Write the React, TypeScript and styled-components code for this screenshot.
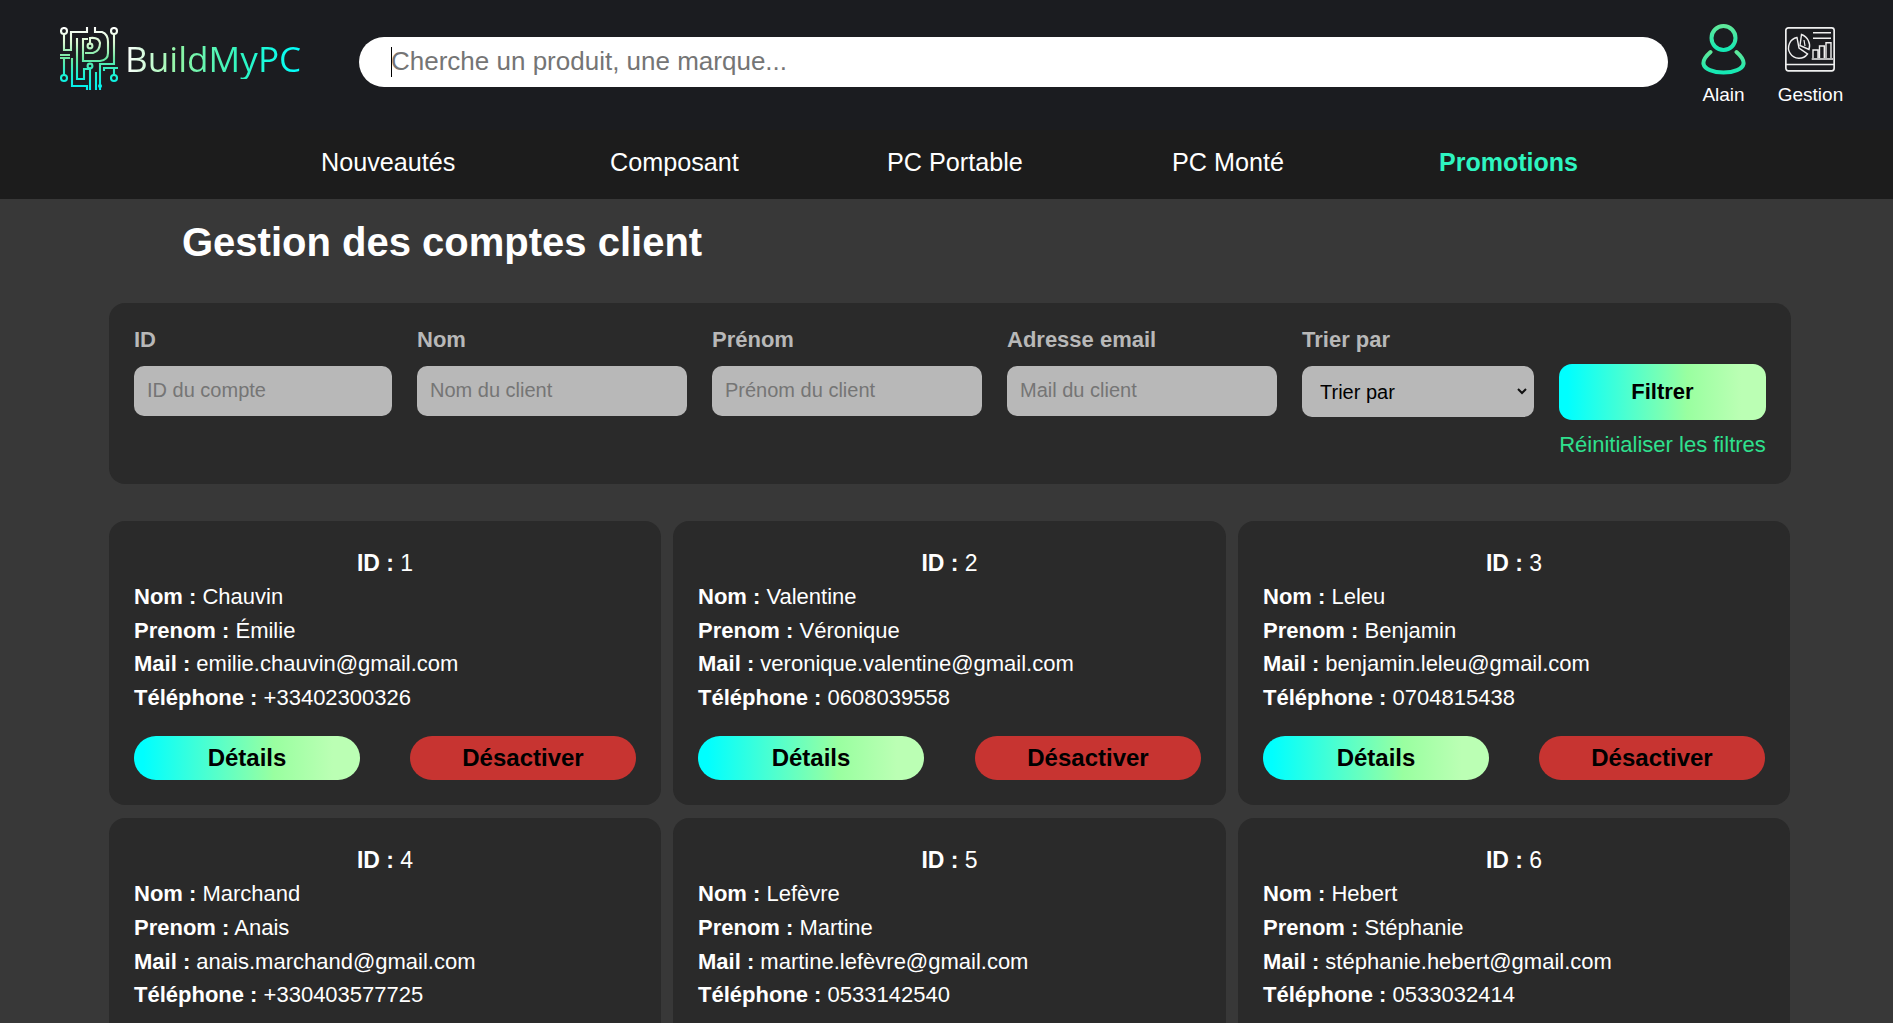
import React from 'react';
import styled, { createGlobalStyle } from 'styled-components';

const GlobalStyle = createGlobalStyle`
  html, body {
    margin: 0;
    height: 100%;
    overflow: hidden;
    background-color: #383838;
    font-family: "Liberation Sans", Arial, sans-serif;
  }
  #root {
    height: 100vh;
    overflow: hidden;
  }
  * {
    box-sizing: border-box;
  }
`;

const TopBar = styled.div`
  height: 130px;
  background-color: #1b1c20;
  display: flex;
  align-items: flex-start;
  padding: 28px 0 0 60px;
`;

const Brand = styled.div`
  width: 299px;
  height: 62px;
  display: flex;
  align-items: center;
  gap: 5px;
`;

const BrandName = styled.span`
  font-family: "Open Sans", "Noto Sans", sans-serif;
  font-size: 35.2px;
  line-height: 42px;
  margin-top: -2px;
  background: linear-gradient(90deg, #ffffff 0%, #8ff5a5 30%, #2ff5c0 65%, #00ffff 100%);
  -webkit-background-clip: text;
  background-clip: text;
  color: transparent;
`;

const SearchBox = styled.div`
  position: relative;
  width: 1309px;
  height: 50px;
  margin-top: 9px;
`;

const SearchInput = styled.input`
  width: 100%;
  height: 100%;
  border: none;
  outline: none;
  border-radius: 25px;
  background-color: #fff;
  padding: 0 32px 2px;
  font-family: inherit;
  font-size: 26px;
  color: #000;
  &::placeholder {
    color: #757575;
  }
`;

const Caret = styled.span`
  position: absolute;
  left: 32px;
  top: 10px;
  width: 1px;
  height: 30px;
  background-color: #000;
`;

const Shortcuts = styled.div`
  display: flex;
  margin-left: 12px;
`;

const Shortcut = styled.div`
  width: 87px;
  display: flex;
  flex-direction: column;
  align-items: center;
  color: #fff;
  font-size: 19px;
  line-height: 22px;
`;

const ShortcutIcon = styled.div`
  height: 54px;
  margin-top: -6px;
  margin-bottom: 8px;
  display: flex;
  align-items: center;
`;

const NavBar = styled.nav`
  height: 69px;
  background-color: #1c1c1c;
  display: grid;
  grid-template-columns: 289px 277px 285px 267px auto;
  align-items: center;
  padding: 0 0 5px 321px;
`;

const NavLink = styled.a<{ $active?: boolean }>`
  font-size: ${p => (p.$active ? '25px' : '25.2px')};
  color: ${p => (p.$active ? '#2ef5c0' : '#fff')};
  font-weight: ${p => (p.$active ? 700 : 400)};
`;

const Main = styled.main`
  padding: 0 102px 0 109px;
`;

const Title = styled.h1`
  margin: 0;
  padding: 20px 0 38px 73px;
  font-size: 40px;
  line-height: 46px;
  font-weight: 700;
  color: #fff;
`;

const FilterPanel = styled.section`
  height: 181px;
  background-color: #2a2a2a;
  border-radius: 16px;
  padding: 25px;
  display: grid;
  grid-template-columns: 258px 270px 270px 270px 232px 207px;
  column-gap: 25px;
  margin-bottom: 37px;
`;

const Field = styled.div`
  display: flex;
  flex-direction: column;
`;

const FieldLabel = styled.label`
  height: 26px;
  margin-bottom: 12px;
  font-size: 22px;
  line-height: 24px;
  font-weight: 700;
  color: #b8b8b8;
`;

const TextInput = styled.input`
  height: 50px;
  width: 100%;
  border: none;
  border-radius: 10px;
  background-color: #b8b8b8;
  padding: 0 13px 1px;
  font-family: inherit;
  font-size: 20px;
  &::placeholder {
    color: #757575;
  }
`;

const SortSelect = styled.select`
  height: 51px;
  width: 100%;
  border: none;
  border-radius: 10px;
  appearance: none;
  background: #b8b8b8 url("data:image/svg+xml,%3Csvg xmlns='http://www.w3.org/2000/svg' width='10' height='7'%3E%3Cpath d='M1 1l4 4 4-4' fill='none' stroke='%23111' stroke-width='2'/%3E%3C/svg%3E") no-repeat right 7px center;
  padding: 0 0 0 18px;
  font-family: inherit;
  font-size: 20px;
  color: #000;
`;

const FilterActions = styled.div`
  display: flex;
  flex-direction: column;
  padding-top: 36px;
`;

const GradientButton = styled.button`
  border: none;
  color: #000;
  font-family: inherit;
  font-weight: 700;
  background: linear-gradient(90deg, #00ffff 4%, #99ffa0 62%, #bbffb4 88%);
`;

const FilterButton = styled(GradientButton)`
  height: 56px;
  border-radius: 13px;
  font-size: 22px;
`;

const ResetLink = styled.a`
  margin-top: 12px;
  font-size: 22px;
  line-height: 25px;
  white-space: nowrap;
  text-align: center;
  color: #2fe08e;
`;

const CardGrid = styled.div`
  display: grid;
  grid-template-columns: 552px 553px 552px;
  gap: 13px 12px;
`;

const Card = styled.article`
  background-color: #2a2a2a;
  border-radius: 16px;
  padding: 25px;
  color: #fff;
  font-size: 22px;
  line-height: 33.75px;
`;

const CardId = styled.div`
  padding-top: 1px;
  margin-bottom: -1px;
  text-align: center;
  font-size: 23px;
`;

const CardActions = styled.div`
  display: flex;
  justify-content: space-between;
  margin-top: 21.5px;
`;

const DetailsButton = styled(GradientButton)`
  width: 226px;
  height: 44px;
  border-radius: 22px;
  font-size: 24px;
`;

const DisableButton = styled.button`
  width: 226px;
  height: 44px;
  border: none;
  border-radius: 22px;
  background-color: #c73431;
  color: #000;
  font-family: inherit;
  font-size: 24px;
  font-weight: 700;
`;

const clients = [
  { id: 1, nom: 'Chauvin', prenom: 'Émilie', mail: 'emilie.chauvin@gmail.com', tel: '+33402300326', actions: true },
  { id: 2, nom: 'Valentine', prenom: 'Véronique', mail: 'veronique.valentine@gmail.com', tel: '0608039558', actions: true },
  { id: 3, nom: 'Leleu', prenom: 'Benjamin', mail: 'benjamin.leleu@gmail.com', tel: '0704815438', actions: true },
  { id: 4, nom: 'Marchand', prenom: 'Anais', mail: 'anais.marchand@gmail.com', tel: '+330403577725', actions: false },
  { id: 5, nom: 'Lefèvre', prenom: 'Martine', mail: 'martine.lefèvre@gmail.com', tel: '0533142540', actions: false },
  { id: 6, nom: 'Hebert', prenom: 'Stéphanie', mail: 'stéphanie.hebert@gmail.com', tel: '0533032414', actions: false },
];

const navItems = ['Nouveautés', 'Composant', 'PC Portable', 'PC Monté'];

const filters = [
  { label: 'ID', placeholder: 'ID du compte' },
  { label: 'Nom', placeholder: 'Nom du client' },
  { label: 'Prénom', placeholder: 'Prénom du client' },
  { label: 'Adresse email', placeholder: 'Mail du client' },
];

const LogoIcon = () => (
  <svg width="60" height="64" viewBox="60 28 60 64" fill="none">
    <defs>
      <linearGradient id="logoStroke" gradientUnits="userSpaceOnUse" x1="0" y1="28" x2="0" y2="90">
        <stop offset="0" stopColor="#ffffff" />
        <stop offset="0.25" stopColor="#d8f7d0" />
        <stop offset="0.5" stopColor="#6fe8a0" />
        <stop offset="0.75" stopColor="#1ff0d0" />
        <stop offset="1" stopColor="#00f0f0" />
      </linearGradient>
    </defs>
    <g stroke="url(#logoStroke)" strokeWidth="2.1">
      <circle cx="64" cy="32" r="3" />
      <circle cx="114" cy="32" r="3" />
      <circle cx="64" cy="79" r="3" />
      <circle cx="114" cy="79" r="3" />
      <circle cx="90" cy="47" r="2.4" />
      <circle cx="90" cy="67" r="2.4" />
      <path d="M64 35V51H71V33H87V28" />
      <path d="M95 28V33H102Q108 35 108 43V54Q108 61 100 62H83V40H88" />
      <path d="M90 44V39Q99 38 100 44Q100 52 93 54H85" />
      <path d="M114 35V65H100V74" />
      <path d="M118 69H104V72" />
      <path d="M114 76V69" />
      <path d="M60 56H70M60 59H70" />
      <path d="M64 76V59" />
      <path d="M72 59V87H87V91" />
      <path d="M77 39V80H84V70H90" />
      <path d="M90 70V91" />
      <path d="M96 73V91" />
      <path d="M100 74V91" />
      <circle cx="100" cy="87" r="1" fill="#00f0f0" />
    </g>
  </svg>
);

const UserIcon = () => (
  <svg width="46" height="54" viewBox="0 0 46 54" fill="none">
    <defs>
      <linearGradient id="userStroke" x1="0" y1="0" x2="0" y2="1">
        <stop offset="0" stopColor="#5fe89a" />
        <stop offset="1" stopColor="#14e8b4" />
      </linearGradient>
    </defs>
    <g stroke="url(#userStroke)" strokeWidth="4" strokeLinecap="round">
      <circle cx="22.5" cy="16" r="12" />
      <path d="M9.500 30C5 34 1.800 38 2.500 42C3.500 47 12 50.500 22.500 50.500C33 50.500 41.500 47 42.500 42C43.200 38 40 34 35.500 30" />
    </g>
  </svg>
);

const ChartIcon = () => (
  <svg width="52" height="45" viewBox="0 0 52 45" fill="none" stroke="#efefef">
    <rect x="0.85" y="0.85" width="48.3" height="43" rx="2.500" strokeWidth="1.700" />
    <path d="M1 37.500H49" strokeWidth="1.700" />
    <path d="M12 10.500A10.500 10.500 0 1 0 22.500 27L14 21Z" strokeWidth="1.400" />
    <path d="M16.500 7.500A12 12 0 0 1 24 22.500L15 18.500Z" strokeWidth="1.400" />
    <path d="M19 13L20 19" strokeWidth="1.200" />
    <path d="M28 5.700H46M28 11.300H46" strokeWidth="1.600" />
    <path d="M26.700 32H48M28 31V23H33V31M34.500 31V19H39.300V31M41 31V15.700H46V31" strokeWidth="1.400" />
  </svg>
);

export default function App() {
  return (
    <>
      <GlobalStyle />
      <header>
        <TopBar>
          <Brand>
            <LogoIcon />
            <BrandName>BuildMyPC</BrandName>
          </Brand>
          <SearchBox>
            <SearchInput placeholder="Cherche un produit, une marque..." />
            <Caret />
          </SearchBox>
          <Shortcuts>
            <Shortcut>
              <ShortcutIcon>
                <UserIcon />
              </ShortcutIcon>
              Alain
            </Shortcut>
            <Shortcut>
              <ShortcutIcon>
                <ChartIcon />
              </ShortcutIcon>
              Gestion
            </Shortcut>
          </Shortcuts>
        </TopBar>
        <NavBar>
          {navItems.map(item => (
            <NavLink key={item}>{item}</NavLink>
          ))}
          <NavLink $active>Promotions</NavLink>
        </NavBar>
      </header>
      <Main>
        <Title>Gestion des comptes client</Title>
        <FilterPanel>
          {filters.map(f => (
            <Field key={f.label}>
              <FieldLabel>{f.label}</FieldLabel>
              <TextInput placeholder={f.placeholder} />
            </Field>
          ))}
          <Field>
            <FieldLabel>Trier par</FieldLabel>
            <SortSelect>
              <option>Trier par</option>
            </SortSelect>
          </Field>
          <FilterActions>
            <FilterButton>Filtrer</FilterButton>
            <ResetLink>Réinitialiser les filtres</ResetLink>
          </FilterActions>
        </FilterPanel>
        <CardGrid>
          {clients.map(c => (
            <Card key={c.id}>
              <CardId>
                <b>ID :</b> {c.id}
              </CardId>
              <div>
                <b>Nom :</b> {c.nom}
              </div>
              <div>
                <b>Prenom :</b> {c.prenom}
              </div>
              <div>
                <b>Mail :</b> {c.mail}
              </div>
              <div>
                <b>Téléphone :</b> {c.tel}
              </div>
              {c.actions && (
                <CardActions>
                  <DetailsButton>Détails</DetailsButton>
                  <DisableButton>Désactiver</DisableButton>
                </CardActions>
              )}
            </Card>
          ))}
        </CardGrid>
      </Main>
    </>
  );
}
